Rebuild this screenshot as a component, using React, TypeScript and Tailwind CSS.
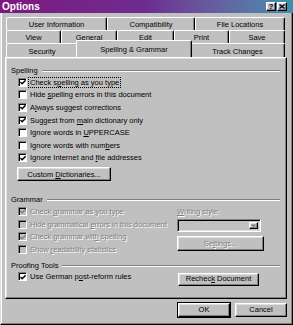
import type { ReactNode } from 'react'

const raised =
  'border border-t-white border-l-white border-r-black border-b-black shadow-[inset_-1px_-1px_0_#808080,inset_1px_1px_0_#dfdfdf]'
const dim = 'text-[#808080] [text-shadow:1px_1px_0_#ffffff]'

function Box({ checked, disabled }: { checked?: boolean; disabled?: boolean }) {
  return (
    <span
      className={`w-[9px] h-[9px] shrink-0 flex items-center justify-center border border-t-[#808080] border-l-[#808080] border-r-white border-b-white shadow-[inset_1px_1px_0_#000] ${
        disabled ? 'bg-[#c0c0c0]' : 'bg-white'
      }`}
    >
      {checked && (
        <svg width="7" height="7" viewBox="0 0 7 7" className="ml-[1px] mt-[1px]">
          <path d="M0.5 3 L2.5 5 L6.5 1" stroke={disabled ? '#808080' : '#000'} strokeWidth="1.6" fill="none" />
        </svg>
      )}
    </span>
  )
}

function Row({
  checked,
  disabled,
  focus,
  children,
}: {
  checked?: boolean
  disabled?: boolean
  focus?: boolean
  children: ReactNode
}) {
  return (
    <div className="h-[12.6px] flex items-center pl-[7px]">
      <Box checked={checked} disabled={disabled} />
      <span
        className={`ml-[2px] px-[1px] leading-[9px] whitespace-nowrap ${disabled ? dim : 'text-black'} ${
          focus ? 'outline outline-1 outline-dotted outline-black' : ''
        }`}
      >
        {children}
      </span>
    </div>
  )
}

function Group({ label, className = '' }: { label: string; className?: string }) {
  return (
    <div className={`flex items-center h-[10px] ${className}`}>
      <span className="whitespace-nowrap">{label}</span>
      <div className="flex-1 ml-[4px] h-[2px] border-t border-t-[#808080] border-b border-b-white" />
    </div>
  )
}

function Tab({ w, children }: { w: string; children: ReactNode }) {
  return (
    <div
      className={`${w} h-full flex items-center justify-center pt-[2px] border-t border-l border-r border-t-white border-l-white border-r-black shadow-[inset_-1px_0_0_#808080] rounded-t-[2px] whitespace-nowrap`}
    >
      <span>{children}</span>
    </div>
  )
}

function Button({ className = '', children }: { className?: string; children: ReactNode }) {
  return (
    <div className={`${raised} flex items-center justify-center whitespace-nowrap ${className}`}>
      <span>{children}</span>
    </div>
  )
}

export default function App() {
  return (
    <div className="w-[293px] h-[325px] bg-[#c0c0c0] flex flex-col font-['Liberation_Sans',Arial,sans-serif] text-[7.5px] text-black select-none">
      {/* title bar */}
      <div className="h-[13px] shrink-0 flex items-center pl-[2px] bg-gradient-to-r from-[#7d1680] via-[#6e2c90] to-[#3b8fb0]">
        <span className="text-white font-bold text-[10px] leading-none">Options</span>
        <div className="ml-auto mr-[6px] flex gap-[1px]">
          <div className={`w-[10px] h-[9px] bg-[#c0c0c0] ${raised} flex items-center justify-center text-[8px] font-bold leading-none`}>
            ?
          </div>
          <div className={`w-[10px] h-[9px] bg-[#c0c0c0] ${raised} flex items-center justify-center`}>
            <svg width="6" height="5" viewBox="0 0 6 5">
              <path d="M0.5 0.5 L5.5 4.5 M5.5 0.5 L0.5 4.5" stroke="#000" strokeWidth="1.3" />
            </svg>
          </div>
        </div>
      </div>

      {/* body */}
      <div className="flex-1 flex flex-col border-l border-l-[#dfdfdf] border-r border-r-black border-b border-b-black shadow-[inset_-1px_-1px_0_#808080,inset_1px_0_0_#ffffff]">
        {/* tabs */}
        <div className="mt-[4px] ml-[5px] w-[279px] flex flex-col">
          <div className="h-[13px] flex">
            <Tab w="w-[101px]">User Information</Tab>
            <Tab w="w-[88px]">Compatibility</Tab>
            <Tab w="w-[90px]">File Locations</Tab>
          </div>
          <div className="h-[13px] flex">
            <Tab w="w-[55px]">View</Tab>
            <Tab w="w-[56px]">General</Tab>
            <Tab w="w-[57px]">Edit</Tab>
            <Tab w="w-[55px]">Print</Tab>
            <Tab w="w-[56px]">Save</Tab>
          </div>
          <div className="h-[14px] flex items-end">
            <Tab w="w-[72px]">Security</Tab>
            <div className="relative z-10 -mx-[2px] -mt-[2px] h-[17px] w-[116px] bg-[#c0c0c0] flex items-center justify-center pt-[1px] border-t border-l border-r border-t-white border-l-white border-r-black shadow-[inset_-1px_0_0_#808080] rounded-t-[2px]">
              <span>Spelling &amp; Grammar</span>
            </div>
            <Tab w="w-[95px]">Track Changes</Tab>
          </div>
        </div>

        {/* panel */}
        <div className={`ml-[4px] w-[282px] h-[242px] flex flex-col pl-[5px] pr-[6px] pt-[8px] ${raised}`}>
          <Group label="Spelling" />
          <Row checked focus>
            Check s<u>p</u>elling as you type
          </Row>
          <Row>
            Hide <u>s</u>pelling errors in this document
          </Row>
          <Row checked>
            A<u>l</u>ways suggest corrections
          </Row>
          <Row checked>
            Suggest from <u>m</u>ain dictionary only
          </Row>
          <Row>
            Ignore words in <u>U</u>PPERCASE
          </Row>
          <Row>
            Ignore words with num<u>b</u>ers
          </Row>
          <Row checked>
            Ignore Internet and <u>f</u>ile addresses
          </Row>
          <div className="pl-[6px] mt-[3px]">
            <Button className="w-[94px] h-[14px]">
              Custom <u>D</u>ictionaries...
            </Button>
          </div>

          <Group label="Grammar" className="mt-[13px] h-[11px]" />
          <div className="flex">
            <div className="w-[166px] flex flex-col">
              <Row checked disabled>
                Check <u>g</u>rammar as you type
              </Row>
              <Row disabled>
                Hide grammatical <u>e</u>rrors in this document
              </Row>
              <Row checked disabled>
                Check grammar wit<u>h</u> spelling
              </Row>
              <Row disabled>
                Show <u>r</u>eadability statistics
              </Row>
            </div>
            <div className="flex flex-col">
              <div className={`h-[12.6px] flex items-center ${dim}`}>
                <span>
                  <u>W</u>riting style:
                </span>
              </div>
              <div className="mt-[1.4px] w-[84px] h-[13px] flex border border-t-[#808080] border-l-[#808080] border-r-white border-b-white shadow-[inset_1px_1px_0_#000,inset_-1px_-1px_0_#dfdfdf] bg-[#c0c0c0] p-[2px] justify-end">
                <div className={`w-[9px] h-full ${raised} flex items-center justify-center`}>
                  <svg width="5" height="4" viewBox="0 0 5 4">
                    <path d="M0 0.5 H5 L2.5 3.5 Z" fill="#808080" />
                  </svg>
                </div>
              </div>
              <Button className={`mt-[4px] w-[87px] h-[15px] ${dim}`}>
                Se<u>t</u>tings...
              </Button>
            </div>
          </div>

          <Group label="Proofing Tools" className="mt-[5px]" />
          <div className="flex items-start">
            <div className="w-[167px]">
              <Row checked>
                Use German p<u>o</u>st-reform rules
              </Row>
            </div>
            <Button className="mt-[2px] w-[81px] h-[13px]">
              Rechec<u>k</u> Document
            </Button>
          </div>
        </div>

        {/* dialog buttons */}
        <div className="mt-[4px] flex justify-end gap-[5px] pr-[5px]">
          <Button className="w-[52px] h-[14px] outline outline-1 outline-black">OK</Button>
          <Button className="w-[52px] h-[14px]">Cancel</Button>
        </div>
      </div>
    </div>
  )
}
